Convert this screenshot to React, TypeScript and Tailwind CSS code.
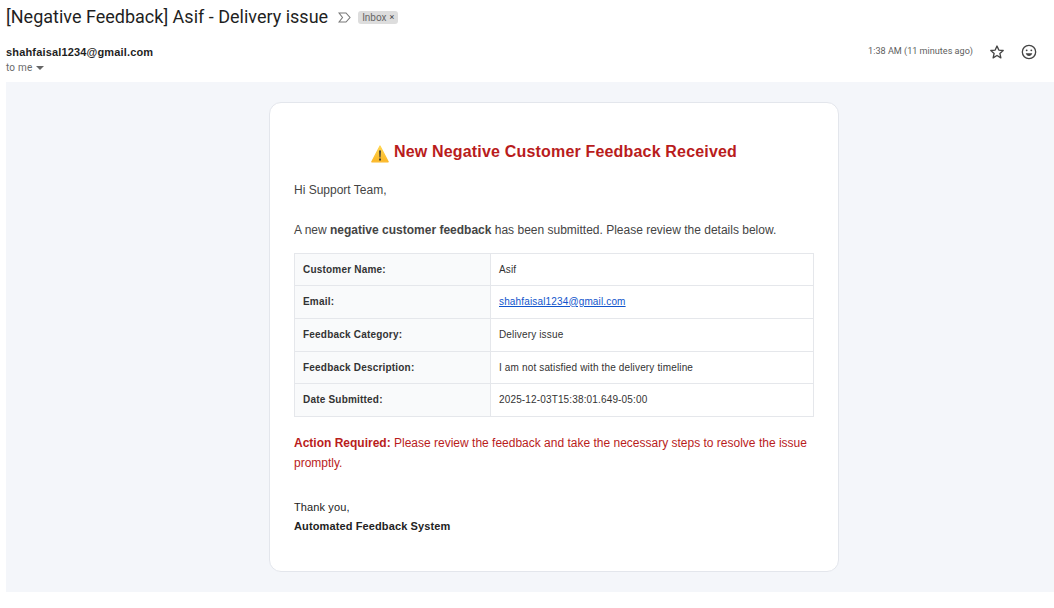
import React from "react";

const rows = [
  { k: "Customer Name:", v: "Asif", h: "h-[32px]", c: "pb-0" },
  { k: "Email:", v: "link", h: "h-[33px]", c: "pb-[2px]" },
  { k: "Feedback Category:", v: "Delivery issue", h: "h-[33px]", c: "pb-[2px]" },
  { k: "Feedback Description:", v: "I am not satisfied with the delivery timeline", h: "h-[32px]", c: "pb-0" },
  { k: "Date Submitted:", v: "2025-12-03T15:38:01.649-05:00", h: "h-[33px]", c: "pb-[2px]" },
];

export default function App() {
  return (
    <div className="w-[1054px] h-[608px] overflow-hidden bg-white font-['Liberation_Sans',sans-serif]">
      <div className="h-[34px] pl-[6px] flex items-center">
        <h1 className="font-['Roboto',sans-serif] text-[18px] leading-[24px] text-[#1f1f1f]">[Negative Feedback] Asif - Delivery issue</h1>
        <svg className="ml-[10px]" width="13" height="11" viewBox="0 0 13 11" fill="none" stroke="#777" strokeWidth="1.1"><path d="M1 1h7l4 4.500L8 10H1l3.500-4.500z" /></svg>
        <span className="ml-[7px] h-[13px] w-[40px] pl-[4px] flex items-center gap-[3px] rounded-[3px] bg-[#dddddd] font-['Roboto',sans-serif] text-[10px] text-[#666]">Inbox <span className="text-[9px] text-[#444] mt-[1px]">×</span></span>
      </div>
      <div className="h-[48px] pl-[6px] pr-[17px] flex justify-between">
        <div className="pt-[11px]">
          <div className="text-[11px] leading-[14px] font-bold text-[#1f1f1f] tracking-[0.16px]">shahfaisal1234@gmail.com</div>
          <div className="mt-[3px] flex items-center gap-[4px] font-['Roboto',sans-serif] text-[10px] leading-[12px] tracking-[0.2px] text-[#6a6a6a]">
            to me
            <span className="w-0 h-0 border-x-[4px] border-x-transparent border-t-[4px] border-t-[#666]" />
          </div>
        </div>
        <div className="flex items-start pt-[10px]">
          <span className="font-['Roboto',sans-serif] text-[9.1px] leading-[14px] text-[#5e5e5e]">1:38 AM (11 minutes ago)</span>
          <svg className="ml-[16px]" width="16" height="16" viewBox="0 0 24 24" fill="none" stroke="#444" strokeWidth="2" strokeLinejoin="round"><path d="M12 3l2.700 6.100 6.600.7-5 4.400 1.500 6.500L12 17.300l-5.800 3.400 1.500-6.500-5-4.400 6.600-.7z" /></svg>
          <svg className="ml-[16px]" width="16" height="16" viewBox="0 0 24 24" fill="none" stroke="#444" strokeWidth="2"><circle cx="12" cy="12" r="10" /><circle cx="8.500" cy="9.500" r="1.400" fill="#444" stroke="none" /><circle cx="15.500" cy="9.500" r="1.400" fill="#444" stroke="none" /><path d="M7 14h10c-.8 2.500-2.700 4-5 4s-4.200-1.500-5-4z" fill="#444" stroke="none" /></svg>
        </div>
      </div>
      <div className="ml-[6px] h-[510px] bg-[#f4f6fa] pt-[20px] pl-[263px]">
        <div className="w-[570px] h-[470px] bg-white border border-[#e3e6ec] rounded-[12px] pt-[37px] px-[24px] text-[#444]">
          <h2 className="h-[24px] flex items-center justify-center gap-[5px] text-[16px] tracking-[0.18px] font-bold text-[#b91c1c] leading-[24px]">
            <svg width="18" height="18" viewBox="0 0 18 18" className="mt-[3px]">
              <defs><linearGradient id="warn" x1="0" y1="0" x2="0" y2="1"><stop offset="0" stopColor="#ffd54f" /><stop offset="1" stopColor="#fbb726" /></linearGradient></defs>
              <path d="M9 1 17.200 16.800H.8z" fill="url(#warn)" stroke="url(#warn)" strokeWidth="1.200" strokeLinejoin="round" />
              <path d="M8.100 5.500h1.800l-.4 7h-1zM8.100 13.500h1.800v2H8.100z" fill="#333" />
            </svg>
            <span>New Negative Customer Feedback Received</span>
          </h2>
          <p className="mt-[16px] text-[12px] leading-[20px]">Hi Support Team,</p>
          <p className="mt-[20px] text-[12px] leading-[20px]">A new <b>negative customer feedback</b> has been submitted. Please review the details below.</p>
          <table className="mt-[13px] w-[520px] border-collapse text-[10px] tracking-[0.2px] table-fixed">
            <tbody>
              {rows.map(({ k, v, h, c }) => (
                <tr key={k} className={h}>
                  <th className={`w-[196px] p-0 pl-[8px] text-left font-bold text-[#333] bg-[#f9fafb] border border-[#e5e7eb] ${c}`}>{k}</th>
                  <td className={`p-0 pl-[8px] text-[#333] tracking-[0.15px] border border-[#e5e7eb] ${c}`}>
                    {v === "link" ? <a className="text-[#1155cc] underline">shahfaisal1234@gmail.com</a> : v}
                  </td>
                </tr>
              ))}
            </tbody>
          </table>
          <p className="mt-[16px] text-[12px] leading-[20px] text-[#b91c1c]"><b>Action Required:</b> Please review the feedback and take the necessary steps to resolve the issue promptly.</p>
          <p className="mt-[25px] text-[11px] leading-[19px] text-[#222] tracking-[0.12px]">Thank you,<br /><b>Automated Feedback System</b></p>
        </div>
      </div>
    </div>
  );
}
